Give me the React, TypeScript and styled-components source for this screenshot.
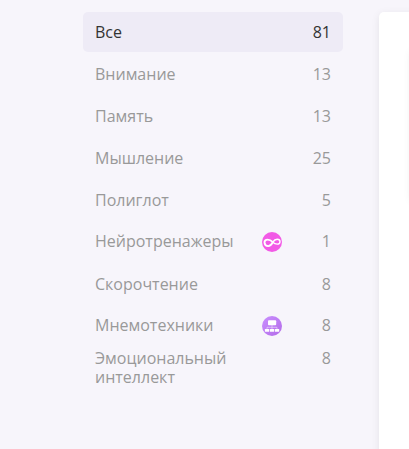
import React, { useState } from "react";
import styled, { createGlobalStyle, css } from "styled-components";

interface Category {
  id: number;
  title: string;
  count: number;
  badge?: "neuro" | "mnemo";
  multiline?: boolean;
}

const categories: Category[] = [
  { id: 1, title: "Все", count: 81 },
  { id: 2, title: "Внимание", count: 13 },
  { id: 3, title: "Память", count: 13 },
  { id: 4, title: "Мышление", count: 25 },
  { id: 5, title: "Полиглот", count: 5 },
  { id: 6, title: "Нейротренажеры", count: 1, badge: "neuro" },
  { id: 7, title: "Скорочтение", count: 8 },
  { id: 8, title: "Мнемотехники", count: 8, badge: "mnemo" },
  { id: 9, title: "Эмоциональный интеллект", count: 8, multiline: true },
];

function NeuroIcon() {
  return (
    <BadgeIcon viewBox="0 0 20 20">
      <circle cx="10" cy="10" r="10" fill="#f25ae6" />
      <path
        d="M10.800 10.200C9.200 8.500 7.400 7.600 5.600 7.600C3.600 7.600 2.300 8.900 2.500 10.700C2.700 12.800 4.200 14.100 6.200 14.100C8.400 14.100 9.600 12.300 10.800 10.200Z"
        fill="none"
        stroke="#fff"
        strokeWidth="1.900"
        strokeLinejoin="round"
      />
      <path
        d="M10.800 10.200C12 8.300 13.300 7.300 15.200 7.300C16.900 7.300 18 8.300 18 9.700C18 11.100 16.900 12.100 15.300 12.100C13.600 12.100 12.100 11.500 10.800 10.200Z"
        fill="none"
        stroke="#fff"
        strokeWidth="1.400"
        strokeLinejoin="round"
      />
    </BadgeIcon>
  );
}

function MnemoIcon() {
  return (
    <BadgeIcon viewBox="0 0 20 20">
      <defs>
        <linearGradient id="mnemo" x1="0" y1="0" x2="1" y2="1">
          <stop offset="0" stopColor="#c98fff" />
          <stop offset="1" stopColor="#b36be8" />
        </linearGradient>
      </defs>
      <circle cx="10" cy="10" r="10" fill="url(#mnemo)" />
      <rect x="6" y="4.300" width="8.200" height="4.900" rx="0.900" fill="#fff" />
      <path
        d="M10 9V13M5 13V11.300H15V13"
        fill="none"
        stroke="#fff"
        strokeWidth="0.600"
        opacity="0.750"
      />
      <rect x="2.900" y="12.900" width="4.300" height="2.900" rx="0.500" fill="#fff" />
      <rect x="7.900" y="12.900" width="4.300" height="2.900" rx="0.500" fill="#fff" />
      <rect x="12.900" y="12.900" width="4.300" height="2.900" rx="0.500" fill="#fff" />
    </BadgeIcon>
  );
}

function App() {
  const [activeId, setActiveId] = useState(1);

  return (
    <>
      <GlobalStyle />
      <Page>
        <Sidebar>
          {categories.map(({ id, title, count, badge, multiline }) => (
            <CategoryItem
              key={id}
              $active={id === activeId}
              $multiline={multiline}
              $badge={!!badge}
              onClick={() => setActiveId(id)}
            >
              <Title>{title}</Title>
              {badge === "neuro" && <NeuroIcon />}
              {badge === "mnemo" && <MnemoIcon />}
              <Count>{count}</Count>
            </CategoryItem>
          ))}
        </Sidebar>
        <Content>
          <Card />
        </Content>
      </Page>
    </>
  );
}

export default App;

const GlobalStyle = createGlobalStyle`
  * {
    box-sizing: border-box;
  }
  body {
    margin: 0;
    background: #f7f5fb;
    font-family: "Open Sans", "Noto Sans", sans-serif;
    overflow: hidden;
  }
`;
const Page = styled.div`
  display: flex;
  gap: 36px;
  height: 100vh;
  padding: 12px 0 0 83px;
  overflow: hidden;
`;
const Sidebar = styled.nav`
  display: flex;
  flex-direction: column;
  flex: none;
  gap: 2px;
  width: 260px;
`;
const CategoryItem = styled.div<{
  $active: boolean;
  $multiline?: boolean;
  $badge: boolean;
}>`
  display: flex;
  align-items: center;
  height: 40px;
  padding: 0 12px;
  border-radius: 5px;
  font-size: 16px;
  line-height: 19px;
  color: #999;
  cursor: pointer;

  ${(props) =>
    props.$active &&
    css`
      background: #eeebf6;
      color: #333;
    `}
  ${(props) =>
    props.$badge &&
    css`
      padding-bottom: 1px;
    `}
  ${(props) =>
    props.$multiline &&
    css`
      align-items: flex-start;
      padding-top: 1px;
    `}
`;
const Title = styled.span`
  flex: none;
  width: 150px;
`;
const BadgeIcon = styled.svg`
  flex: none;
  width: 20px;
  height: 20px;
  margin: 1px 0 0 17px;
`;
const Count = styled.span`
  margin-left: auto;
`;
const Content = styled.main`
  flex: none;
  width: 600px;
  height: 600px;
  padding: 36px 32px;
  border-radius: 5px;
  background: #fff;
  box-shadow: 0 2px 8px rgba(0, 0, 0, 0.08);
`;
const Card = styled.div`
  height: 152px;
  border-radius: 5px;
  box-shadow: 0 2px 8px rgba(0, 0, 0, 0.08);
`;
